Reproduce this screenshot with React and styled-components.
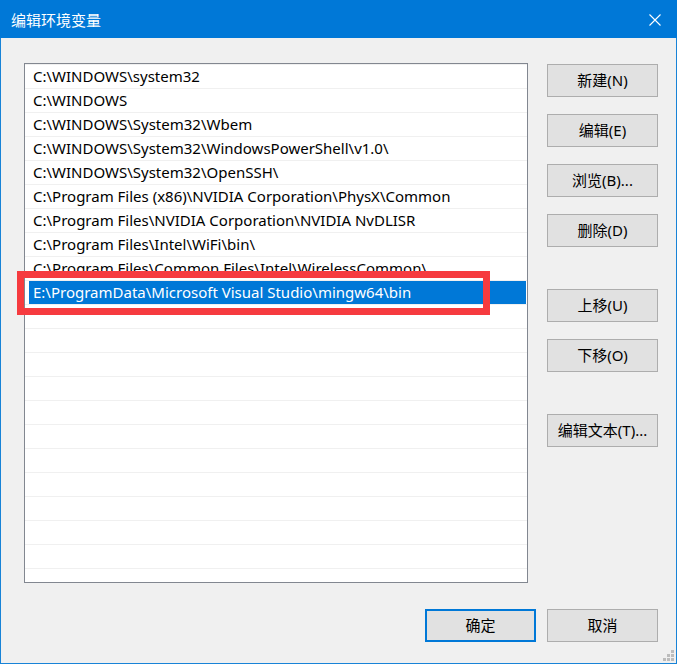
import styled, { createGlobalStyle } from "styled-components";

const GlobalStyle = createGlobalStyle`
  html, body {
    margin: 0;
    padding: 0;
    background: #f0f0f0;
  }
  * {
    box-sizing: border-box;
  }
`;

const Window = styled.div`
  position: relative;
  width: 677px;
  height: 664px;
  display: flex;
  flex-direction: column;
  background: #f0f0f0;
  border: 1px solid #1883d7;
  border-top: none;
  font-family: "Noto Sans", "Noto Sans CJK SC", sans-serif;
  font-size: 15px;
  color: #000;
`;

const TitleBar = styled.div`
  height: 38px;
  margin: 0 -1px;
  padding: 0 16px 0 11px;
  display: flex;
  align-items: center;
  justify-content: space-between;
  background: #0078d7;
  color: #fff;
`;

const Title = styled.div`
  font-family: "Noto Sans CJK SC", sans-serif;
  font-size: 15px;
  line-height: 1;
  margin-top: 1px;
`;

const Close = styled.div`
  width: 12px;
  height: 12px;
  display: flex;
  margin-top: 1px;
`;

const Body = styled.div`
  flex: 1;
  display: flex;
  flex-direction: column;
  padding: 25px 18px 0 23px;
`;

const Main = styled.div`
  display: flex;
  gap: 19px;
`;

const ListWrap = styled.div`
  position: relative;
  width: 504px;
  height: 520px;
`;

const List = styled.div`
  width: 100%;
  height: 100%;
  overflow: hidden;
  background: #fff;
  border: 1px solid #828790;
`;

const Row = styled.div`
  height: 24px;
  border-top: 1px solid #f0f0f0;
  display: flex;
  padding-right: 1px;
`;

const Cell = styled.div`
  flex: 1;
  margin-left: 4px;
  padding: 0 0 0 4px;
  line-height: 23px;
  white-space: nowrap;
  background: ${(p) => (p.$selected ? "#0078d7" : "transparent")};
  color: ${(p) => (p.$selected ? "#fff" : "#000")};
`;

const Mark = styled.div`
  position: absolute;
  left: -7px;
  top: 208px;
  width: 473px;
  height: 44px;
  border: 7px solid #f63b3f;
  pointer-events: none;
`;

const Side = styled.div`
  display: flex;
  flex-direction: column;
  padding-top: 1px;
`;

const Button = styled.button`
  width: 111px;
  height: 33px;
  margin-top: ${(p) => p.$gap || 0}px;
  padding: 0;
  font: inherit;
  line-height: 1;
  color: #000;
  background: #e1e1e1;
  border: ${(p) => (p.$default ? "2px solid #0078d7" : "1px solid #adadad")};
  border-radius: 0;
`;

const Footer = styled.div`
  display: flex;
  justify-content: flex-end;
  gap: 11px;
  margin-top: 26px;
`;

const Grip = styled.svg`
  position: absolute;
  right: 2px;
  bottom: 2px;
`;

const paths = [
  "C:\\WINDOWS\\system32",
  "C:\\WINDOWS",
  "C:\\WINDOWS\\System32\\Wbem",
  "C:\\WINDOWS\\System32\\WindowsPowerShell\\v1.0\\",
  "C:\\WINDOWS\\System32\\OpenSSH\\",
  "C:\\Program Files (x86)\\NVIDIA Corporation\\PhysX\\Common",
  "C:\\Program Files\\NVIDIA Corporation\\NVIDIA NvDLISR",
  "C:\\Program Files\\Intel\\WiFi\\bin\\",
  "C:\\Program Files\\Common Files\\Intel\\WirelessCommon\\",
  "E:\\ProgramData\\Microsoft Visual Studio\\mingw64\\bin",
];

const rows = Array.from({ length: 22 }, (_, i) => paths[i] || "");

const sideButtons = [
  { label: "新建(N)", gap: 0 },
  { label: "编辑(E)", gap: 17 },
  { label: "浏览(B)...", gap: 17 },
  { label: "删除(D)", gap: 17 },
  { label: "上移(U)", gap: 42 },
  { label: "下移(O)", gap: 17 },
  { label: "编辑文本(T)...", gap: 42 },
];

export default function App() {
  return (
    <>
      <GlobalStyle />
      <Window>
        <TitleBar>
          <Title>编辑环境变量</Title>
          <Close>
            <svg width="12" height="12" viewBox="0 0 12 12">
              <path d="M0.5 0.5 L11.5 11.5 M11.5 0.5 L0.5 11.5" stroke="#fff" strokeWidth="1.1" />
            </svg>
          </Close>
        </TitleBar>
        <Body>
          <Main>
            <ListWrap>
              <List>
                {rows.map((text, i) => (
                  <Row key={i}>
                    <Cell $selected={i === 9}>{text}</Cell>
                  </Row>
                ))}
              </List>
              <Mark />
            </ListWrap>
            <Side>
              {sideButtons.map((b) => (
                <Button key={b.label} $gap={b.gap}>
                  {b.label}
                </Button>
              ))}
            </Side>
          </Main>
          <Footer>
            <Button $default>确定</Button>
            <Button>取消</Button>
          </Footer>
        </Body>
        <Grip width="11" height="11" viewBox="0 0 11 11">
          <g fill="#bcbcbc">
            <rect x="8" y="0" width="3" height="3" />
            <rect x="4" y="4" width="3" height="3" />
            <rect x="8" y="4" width="3" height="3" />
            <rect x="0" y="8" width="3" height="3" />
            <rect x="4" y="8" width="3" height="3" />
            <rect x="8" y="8" width="3" height="3" />
          </g>
        </Grip>
      </Window>
    </>
  );
}
